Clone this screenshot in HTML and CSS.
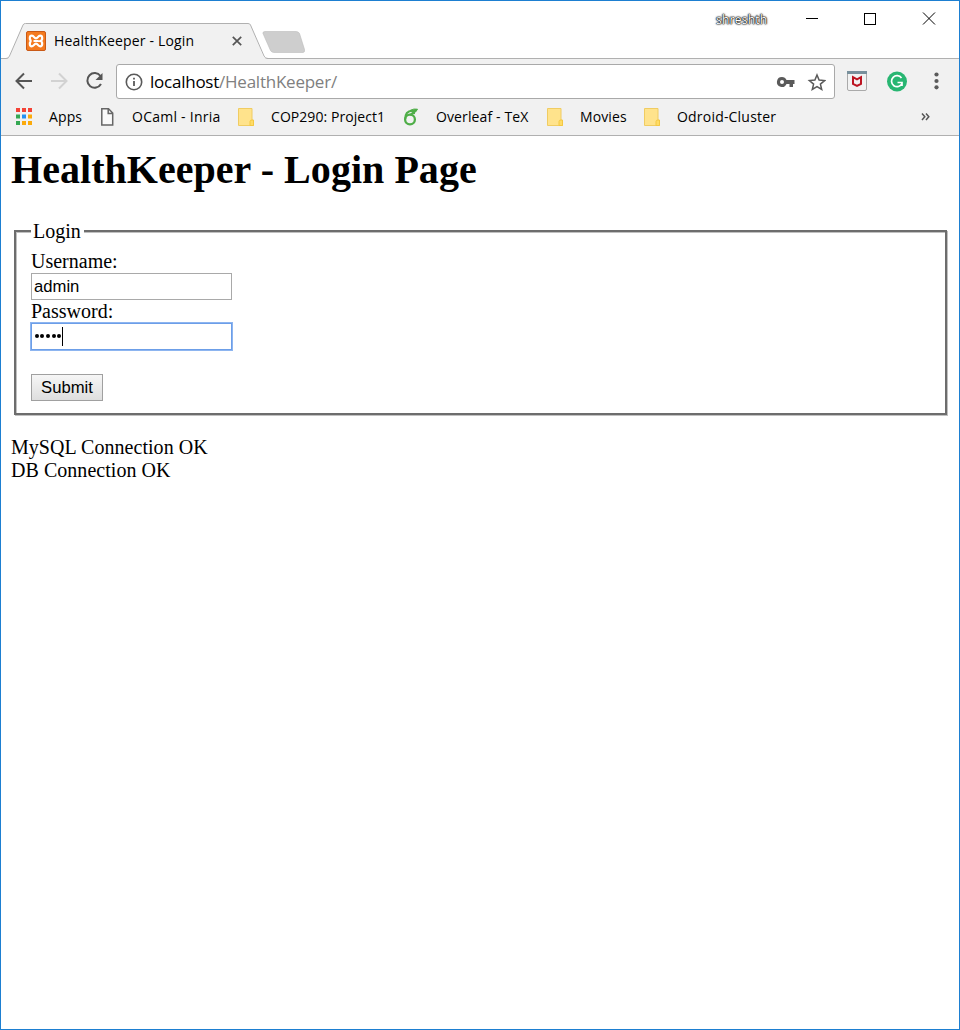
FILE: index.html
```html
<!DOCTYPE html>
<html lang="en">
<head>
<meta charset="utf-8">
<title>HealthKeeper - Login</title>
<link rel="stylesheet" href="styles.css">
</head>
<body>
<div class="window">
  <header class="titlebar">
    <div class="tab">
      <svg class="tab-shape" width="310" height="36" viewBox="0 0 310 36">
        <path d="M0 35.5H6Q8 35.5 9 33L21 4Q23 .5 26 .5H247Q249 .5 250 3L262 33Q263 35.5 266 35.5V36H0Z" fill="#f1f1f1"/>
        <path d="M0 35.5H5Q7.500 35.500 8.500 33L22 2Q22.500.5 24.500.5H247Q249 .5 249.500 2L263 33Q264 35.500 267 35.500H310" fill="none" stroke="#b0b0b0"/>
        <path d="M264 8.500H295Q297.500 8.500 298.500 10.500L303.500 26.500Q304 29.500 302 29.500H273Q270.500 29.500 269.500 27.500L262 10.500Q261.500 8.500 264 8.500Z" fill="#cecece" stroke="#bcbcbc" stroke-width=".6"/>
      </svg>
      <div class="tab-content">
        <svg width="20" height="20" viewBox="0 0 20 20">
          <rect x=".5" y=".5" width="19" height="19" rx="1.500" fill="#f47b20" stroke="#c95916"/>
          <path d="M7.500 10H12.500M5.500 10C3.200 9.300 3.200 4.700 5.800 4.700C8.200 4.700 8 7.300 10 7.300S11.800 4.700 14.200 4.700C16.800 4.700 16.800 9.300 14.500 10C16.800 10.700 16.800 15.300 14.200 15.300C11.800 15.300 12 12.700 10 12.700S8.200 15.300 5.800 15.300C3.200 15.300 3.200 10.700 5.500 10" fill="none" stroke="#fff" stroke-width="2.200"/>
        </svg>
        <span class="ui tab-title">HealthKeeper - Login</span>
        <svg width="10" height="10" viewBox="0 0 10 10"><path d="M.8.8L9.200 9.200M9.200.8L.8 9.200" stroke="#555" stroke-width="1.700"/></svg>
      </div>
    </div>
    <div class="controls">
      <span class="ui profile">shreshth</span>
      <svg width="136" height="14" viewBox="0 0 136 14" fill="none" stroke="#000">
        <path d="M3 6.500H15M120 .5L132 12.500M132 .5L120 12.500"/><rect x="61.500" y="1.500" width="11" height="11" shape-rendering="crispEdges"/>
      </svg>
    </div>
  </header>

  <nav class="toolbar">
    <svg class="navicons" width="92" height="20" viewBox="0 0 92 20" fill="none" stroke-width="2">
      <path d="M17 10H2M9 2.500L1.500 10L9 17.500" stroke="#555"/>
      <path d="M36 10H51M44 2.500L51.500 10L44 17.500" stroke="#d2d2d2"/>
      <path d="M85.500 5A7.300 7.300 0 1 0 86 13" stroke="#555"/>
      <path d="M87.500 2V9H80.500Z" fill="#555"/>
    </svg>
    <div class="address">
      <svg width="18" height="18" viewBox="0 0 18 18" fill="none" stroke="#5a5a5a"><circle cx="9" cy="9" r="7.700" stroke-width="1.600"/><path d="M9 8V13M9 4.800V6.500" stroke-width="1.800"/></svg>
      <span class="ui url">localhost<span class="path">/HealthKeeper/</span></span>
      <svg width="50" height="20" viewBox="0 0 50 20">
        <path fill="#5a5a5a" fill-rule="evenodd" d="M6 5A5 5 0 0 1 10.500 8H18.500V12H17V15H13.500V12H10.500A5 5 0 1 1 6 5ZM6 8A2 2 0 1 0 6 12A2 2 0 1 0 6 8Z"/>
        <path d="M41 3L43.100 8.100L48.600 8.600L44.400 12.100L45.700 17.500L41 14.600L36.300 17.500L37.600 12.100L33.400 8.600L38.900 8.100Z" fill="none" stroke="#5a5a5a" stroke-width="1.500"/>
      </svg>
    </div>
    <svg class="extensions" width="100" height="22" viewBox="0 0 100 22">
      <rect x="1.500" y="1.500" width="19" height="19" rx="1.500" fill="#f2f2f2" stroke="#aaa"/>
      <path d="M1 1H21V4H1Z" fill="#78909c"/>
      <path d="M7 7.200L11 9.300L15 7.200V14L11 16L7 14Z" fill="none" stroke="#bd1522" stroke-width="2"/>
      <circle cx="51" cy="11.500" r="10" fill="#28b672"/>
      <path d="M55.500 8A5.500 5.500 0 1 0 56 13.500M51.500 12.500H56V16" fill="none" stroke="#fff" stroke-width="1.700"/>
      <g fill="#5a5a5a"><circle cx="90.500" cy="4.500" r="2.100"/><circle cx="90.500" cy="11" r="2.100"/><circle cx="90.500" cy="17.300" r="2.100"/></g>
    </svg>
  </nav>

  <nav class="bookmarks ui">
    <div class="bookmark apps">
      <svg width="17" height="18" viewBox="0 0 17 18">
        <path fill="#f44336" d="M0 0H4V4H0ZM6 0H10V4H6ZM12 0H16V4H12Z"/>
        <path fill="#34a853" d="M0 6.500H4V10.500H0ZM0 13H4V17H0Z"/>
        <path fill="#2491f3" d="M6 6.500H10V10.500H6Z"/>
        <path fill="#fbaa0b" d="M12 6.500H16V10.500H12ZM6 13H10V17H6ZM12 13H16V17H12Z"/>
      </svg><span>Apps</span>
    </div>
    <div class="bookmark inria">
      <svg width="17" height="18" viewBox="0 0 17 18"><path d="M2.800.8H9.500L13.700 5V17H2.800ZM9.200 1V5.500H13.500" fill="#fafafa" stroke="#666" stroke-width="1.500"/></svg><span>OCaml - Inria</span>
    </div>
    <div class="bookmark project">
      <svg width="17" height="18" viewBox="0 0 17 18"><path d="M.5.5H14V12L15.500 12.500V17.500H.5Z" fill="#ffe38c" stroke="#f0cc62"/><path d="M12 17V13.500Q12 12 14 12H15.500V17.500H12Z" fill="#ffdc66" stroke="#f4c842"/></svg><span>COP290: Project1</span>
    </div>
    <div class="bookmark overleaf">
      <svg width="17" height="18" viewBox="0 0 17 18" fill="none" stroke="#4fae48"><circle cx="7" cy="11.500" r="4.900" stroke-width="2.300"/><path d="M2.300 11C2 6 5 3 9.500 2.500M7 7C8.500 5.500 10.500 5 12 5" stroke-width="2"/><path d="M7 2.500Q11 .3 14.500 1.200Q13.500 4.500 9.500 5" fill="#4fae48"/></svg><span>Overleaf - TeX</span>
    </div>
    <div class="bookmark movies">
      <svg width="17" height="18" viewBox="0 0 17 18"><path d="M.5.5H14V12L15.500 12.500V17.500H.5Z" fill="#ffe38c" stroke="#f0cc62"/><path d="M12 17V13.500Q12 12 14 12H15.500V17.500H12Z" fill="#ffdc66" stroke="#f4c842"/></svg><span>Movies</span>
    </div>
    <div class="bookmark cluster">
      <svg width="17" height="18" viewBox="0 0 17 18"><path d="M.5.5H14V12L15.500 12.500V17.500H.5Z" fill="#ffe38c" stroke="#f0cc62"/><path d="M12 17V13.500Q12 12 14 12H15.500V17.500H12Z" fill="#ffdc66" stroke="#f4c842"/></svg><span>Odroid-Cluster</span>
    </div>
    <svg class="more" width="9" height="8" viewBox="0 0 9 8"><path d="M1 .5L3.800 3.800L1 7M5 .5L7.800 3.800L5 7" fill="none" stroke="#555" stroke-width="1.500"/></svg>
  </nav>

  <main class="page">
    <h1 class="heading">HealthKeeper - Login Page</h1>
    <form>
      <fieldset class="login">
        <legend class="legend">Login</legend>
        <label class="label" for="user">Username:</label>
        <input class="field" id="user" type="text" value="admin">
        <label class="label" for="pass">Password:</label>
        <div class="field focused" id="pass"><i class="dot"></i><i class="dot"></i><i class="dot"></i><i class="dot"></i><i class="dot"></i><i class="caret"></i></div>
        <button class="submit" type="button">Submit</button>
      </fieldset>
    </form>
    <p class="status">MySQL Connection OK<br>DB Connection OK</p>
  </main>
</div>
</body>
</html>
```
FILE: styles.css
```css
* { box-sizing: border-box; }
body { margin: 0; background: #fff; color: #000; }
svg { display: block; flex: none; }
.window { height: 1030px; border: 1px solid #1d7fd1; overflow: hidden; }
.ui { font-family: "Open Sans", "Noto Sans", sans-serif; white-space: nowrap; }

.titlebar { height: 58px; display: flex; justify-content: space-between; align-items: flex-start; background: linear-gradient(#b0b0b0, #b0b0b0) 0 100% / 100% 1px no-repeat; }
.tab { display: grid; margin-top: 22px; }
.tab-shape, .tab-content { grid-area: 1 / 1; }
.tab-content { width: 242px; height: 20px; margin-top: 8px; padding-left: 25px; display: flex; align-items: center; }
.tab-title { margin-left: 8px; width: 178px; font-size: 14px; letter-spacing: .18px; line-height: 20px; }
.controls { display: flex; padding: 11px 20px 0 0; }
.profile { width: 87px; font-size: 12px; letter-spacing: .25px; line-height: 15px; color: #fff; text-shadow: 0 0 1px #000, 0 0 1px #000, 0 0 2px #222, 0 0 2px #222; }

.toolbar { height: 45px; padding-top: 5px; display: flex; background: #f1f1f1; }
.navicons { margin: 7px 9px 0 14px; }
.address { width: 719px; height: 35px; padding: 0 8px 0 8px; display: flex; align-items: center; background: #fff; border: 1px solid #a9a9a9; border-radius: 3px; }
.url { flex: 1; margin-left: 7px; font-size: 17px; line-height: 24px; letter-spacing: -.24px; }
.path { color: #808080; }
.extensions { margin: 6px 0 0 11px; }

.bookmarks { height: 32px; padding: 0 29px 0 15px; display: flex; background: #f1f1f1; border-bottom: 1px solid #b0b0b0; font-size: 14px; line-height: 18px; letter-spacing: .12px; }
.bookmark { display: flex; gap: 16px; padding-top: 4px; }
.apps { width: 83px; }
.inria { width: 139px; letter-spacing: .25px; }
.project { width: 165px; letter-spacing: .06px; }
.overleaf { width: 144px; }
.movies { width: 97px; }
.cluster { letter-spacing: .2px; }
.more { margin: 9px 0 0 auto; }

.page { padding: 11px 11px 0 10px; font: 20px/23px "Liberation Serif", "Times New Roman", serif; }
.heading { height: 46px; margin: 0; font-size: 40px; line-height: 46px; font-weight: bold; letter-spacing: .04px; }
.login { width: 933px; height: 196px; margin: 26px 0 0 3px; padding: 8px 15px 0; border: 2px solid #6d6d6d; box-shadow: inset 1px 1px #c0c0c0, 1px 1px #c0c0c0; }
.legend { height: 23px; padding: 1px 3px 0 2px; background: #fff; line-height: 23px; }
.label { display: block; height: 23px; }
.field { display: block; width: 201px; height: 27px; padding: 0 2px; border: 1px solid #a9a9a9; background: #fff; font: 16.67px "Liberation Sans", Arial, sans-serif; }
.focused { display: flex; align-items: center; padding-left: 2px; border-color: #6c9ee8; box-shadow: 0 0 0 1px #8db5f0; }
.dot { width: 4px; height: 4px; margin: 0 1px 2px .7px; border-radius: 50%; background: #000; }
.caret { width: 1px; height: 19px; background: #000; }
.submit { display: block; width: 72px; height: 27px; margin-top: 24px; padding: 0; border: 1px solid #a0a0a0; background: linear-gradient(#f6f6f6, #dedede); font: 16.67px "Liberation Sans", Arial, sans-serif; color: #000; }
.status { margin: 21px 0 0; letter-spacing: .04px; }
```
